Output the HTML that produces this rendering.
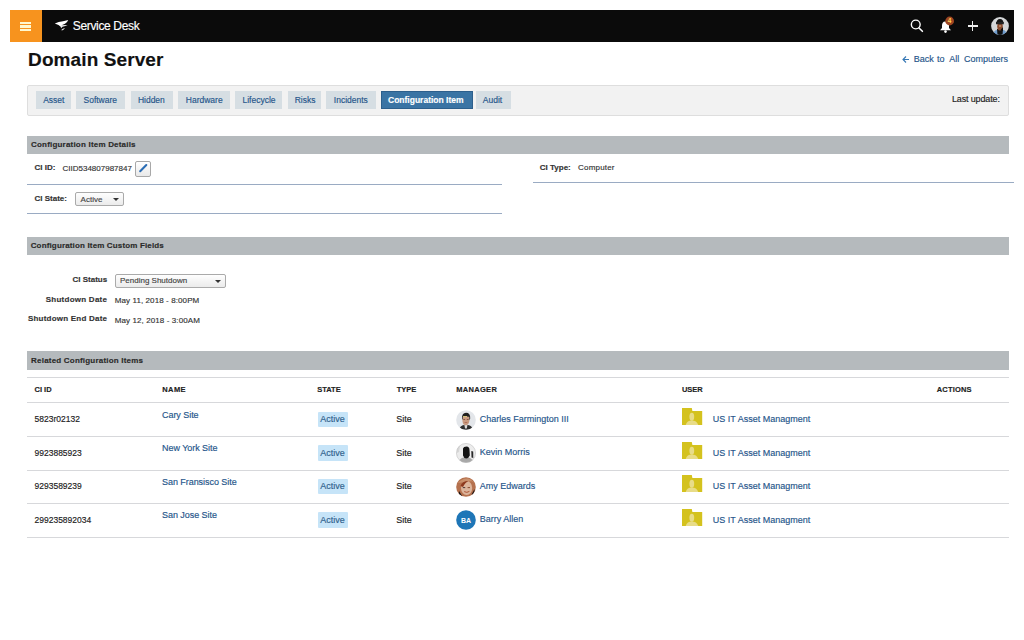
<!DOCTYPE html>
<html><head><meta charset="utf-8">
<style>
*{margin:0;padding:0;box-sizing:border-box}
html,body{width:1024px;height:640px;overflow:hidden;background:#fff}
body{position:relative;font-family:"Liberation Sans",sans-serif;color:#222}
.a{position:absolute}
.t{position:absolute;white-space:nowrap;line-height:1;-webkit-text-stroke:0.15px currentColor}
.lnk{color:#25558a}
.tab{position:absolute;top:91px;height:18px;background:#d6dee3}
.tab.on{background:#3a74a4;border:1px solid #2c5f8c}
.sh{position:absolute;left:27px;width:982px;height:18px;background:#b5babd}
.bl{position:absolute;height:1px;background:#9aabc3}
.tl{position:absolute;left:27px;width:982px;height:1px;background:#d7d8db}
.badge{position:absolute;left:317.5px;width:30.5px;height:15.5px;background:#c6e4f8;border-radius:1px}
.sel{position:absolute;background:linear-gradient(#fefefe,#ebebeb);border:1px solid #aaaaaa;border-radius:2px}
.arr{position:absolute;width:0;height:0;border-left:3px solid transparent;border-right:3px solid transparent;border-top:3px solid #333}
</style></head><body>
<div class="a" style="left:10px;top:10px;width:32px;height:32px;background:#f7931e"></div>
<div class="a" style="left:42px;top:10px;width:972px;height:32px;background:#0b0b0b"></div>
<div class="a" style="left:20px;top:21.6px;width:11px;height:2.4px;background:#fff8d0"></div>
<div class="a" style="left:20px;top:25.3px;width:11px;height:2.4px;background:#fff8d0"></div>
<div class="a" style="left:20px;top:28.9px;width:11px;height:2.4px;background:#fff8d0"></div>
<svg class="a" style="left:50px;top:14px" width="24" height="24" viewBox="0 0 24 24"><path d="M4.8 9.4 Q8.5 7.6 13 7.2 L18.2 6 Q17.3 8.6 15 9.8 L12.2 11 L10.8 12.8 Q9.2 10.6 4.8 9.4 Z" fill="#fff"/><path d="M10.5 11.2 L17.6 11.1 Q15.5 12.4 12.5 12.8 L11 14.2 Z" fill="#f0f0f0"/><path d="M11.3 16 Q12.5 14.6 15 14 Q14 15.6 12 16.4 Z" fill="#eee"/></svg>
<div class="t" style="left:72.80px;top:19.60px;font-size:12px;letter-spacing:-0.35px;color:#fff;">Service Desk</div>
<svg class="a" style="left:904px;top:12px" width="24" height="24" viewBox="0 0 24 24"><circle cx="11.75" cy="12.5" r="4.4" fill="none" stroke="#fff" stroke-width="1.4"/><path d="M15 16 L18.4 19.3" stroke="#fff" stroke-width="1.6" stroke-linecap="round"/></svg>
<svg class="a" style="left:937px;top:16px" width="18" height="18" viewBox="0 0 18 18"><path d="M8 5.5 C6 5.5 5 7.5 5 9.5 L5 12 L3 14.2 L14 14.2 L12 12 L12 9.5 C12 7.5 11 5.5 8 5.5 Z" fill="#fff"/><circle cx="8.5" cy="15.6" r="1.3" fill="#fff"/><circle cx="12.65" cy="5" r="4.4" fill="#9e4622"/><text x="12.65" y="7.4" font-size="6.5" font-family="Liberation Sans" font-weight="bold" fill="#ffd25a" text-anchor="middle">4</text></svg>
<div class="a" style="left:968px;top:25.3px;width:9.5px;height:1.3px;background:#eeeeee"></div>
<div class="a" style="left:972.1px;top:21px;width:1.3px;height:10px;background:#eeeeee"></div>
<svg class="a" style="left:991.3px;top:17px" width="18" height="18" viewBox="0 0 18 18"><defs><clipPath id="hc"><circle cx="9" cy="9" r="8.9"/></clipPath></defs><g clip-path="url(#hc)"><rect width="18" height="18" fill="#d4d6d8"/><path d="M2 18 Q3 13 6 13 L12 13 Q15 13 16 18 Z" fill="#6f9ccc"/><path d="M6 12 L12 12 L11.5 18 L6.5 18 Z" fill="#111"/><ellipse cx="9" cy="9.6" rx="2.8" ry="4" fill="#8a4a2c"/><rect x="8" y="8.5" width="2.2" height="1" fill="#d8b090"/><path d="M5.2 7 Q5.5 2 9 2 Q12.5 2 12.6 7 L12.6 5.8 L5.2 5.8 Z" fill="#151515"/><path d="M5 5 L12.8 5 L12.8 7.2 L5 7.2 Z" fill="#222"/><path d="M9.5 13 L12 10 L12 14 Z" fill="#0d0d0d"/></g></svg>
<div class="t" style="left:28.10px;top:50.45px;font-size:19px;letter-spacing:0.1px;font-weight:bold;color:#111;">Domain Server</div>
<svg class="a" style="left:902px;top:56px" width="8" height="7" viewBox="0 0 8 7"><path d="M4 0.5 L1 3.5 L4 6.5 M1 3.5 L7 3.5" stroke="#3577b5" stroke-width="1.1" fill="none"/></svg>
<div class="t lnk" style="left:913.80px;top:55.05px;font-size:9px;">Back</div>
<div class="t lnk" style="left:937.00px;top:55.05px;font-size:9px;">to</div>
<div class="t lnk" style="left:949.30px;top:55.05px;font-size:9px;">All</div>
<div class="t lnk" style="left:964.00px;top:55.05px;font-size:9px;">Computers</div>
<div class="a" style="left:27px;top:85px;width:982px;height:31px;background:#f2f2f2;border:1px solid #dedede;border-radius:2px"></div>
<div class="tab" style="left:35.7px;width:35.1px"></div>
<div class="t lnk" style="left:43.20px;top:95.68px;font-size:8.5px;">Asset</div>
<div class="tab" style="left:75.8px;width:48.8px"></div>
<div class="t lnk" style="left:83.50px;top:95.68px;font-size:8.5px;">Software</div>
<div class="tab" style="left:130.9px;width:41.8px"></div>
<div class="t lnk" style="left:137.90px;top:95.68px;font-size:8.5px;">Hidden</div>
<div class="tab" style="left:178.2px;width:51.6px"></div>
<div class="t lnk" style="left:185.80px;top:95.68px;font-size:8.5px;">Hardware</div>
<div class="tab" style="left:235.0px;width:47.3px"></div>
<div class="t lnk" style="left:242.50px;top:95.68px;font-size:8.5px;">Lifecycle</div>
<div class="tab" style="left:287.9px;width:33.2px"></div>
<div class="t lnk" style="left:294.70px;top:95.68px;font-size:8.5px;">Risks</div>
<div class="tab" style="left:326.2px;width:49.6px"></div>
<div class="t lnk" style="left:333.80px;top:95.68px;font-size:8.5px;">Incidents</div>
<div class="tab" style="left:475.7px;width:35.3px"></div>
<div class="t lnk" style="left:482.80px;top:95.68px;font-size:8.5px;">Audit</div>
<div class="tab on" style="left:381px;width:92px"></div>
<div class="t" style="left:388.00px;top:95.78px;font-size:8.5px;font-weight:bold;color:#fff;">Configuration Item</div>
<div class="t" style="left:952.00px;top:95.35px;font-size:9px;letter-spacing:-0.15px;color:#222;">Last update:</div>
<div class="sh" style="top:136px"></div>
<div class="t" style="left:31.00px;top:140.70px;font-size:8px;letter-spacing:0.2px;font-weight:bold;color:#2a2a2a;">Configuration Item Details</div>
<div class="t" style="left:34.50px;top:164.45px;font-size:8px;font-weight:bold;color:#333;">CI ID:</div>
<div class="t" style="left:62.50px;top:165.10px;font-size:8px;color:#333;">CIID534807987847</div>
<div class="a" style="left:135.3px;top:161.1px;width:15.5px;height:15.5px;border:1px solid #a8a8a8;border-radius:2px;background:linear-gradient(#fff,#e9e9e9)"></div>
<svg class="a" style="left:136px;top:162px" width="14" height="14" viewBox="0 0 14 14"><path d="M4.2 9.2 L10.3 3.1" stroke="#2b6db5" stroke-width="2.1" stroke-linecap="round"/></svg>
<div class="bl" style="left:27px;top:184px;width:475px"></div>
<div class="t" style="left:34.50px;top:194.70px;font-size:8px;font-weight:bold;color:#333;">CI State:</div>
<div class="sel" style="left:75px;top:192.25px;width:48.5px;height:14px"></div>
<div class="t" style="left:80.60px;top:195.70px;font-size:8px;color:#444;">Active</div>
<div class="arr" style="left:113px;top:198px"></div>
<div class="bl" style="left:27px;top:212.5px;width:475px"></div>
<div class="t" style="left:539.80px;top:164.10px;font-size:8px;font-weight:bold;color:#333;">CI Type:</div>
<div class="t" style="left:578.00px;top:164.10px;font-size:8px;letter-spacing:0.2px;color:#333;">Computer</div>
<div class="bl" style="left:532.5px;top:182px;width:481.5px"></div>
<div class="sh" style="top:237px"></div>
<div class="t" style="left:30.70px;top:242.10px;font-size:8px;letter-spacing:0.15px;font-weight:bold;color:#2a2a2a;">Configuration Item Custom Fields</div>
<div class="t" style="left:0;width:107.20px;text-align:right;top:275.90px;font-size:8px;font-weight:bold;color:#333;">CI Status</div>
<div class="sel" style="left:114.5px;top:273.5px;width:111.5px;height:14px"></div>
<div class="t" style="left:120.00px;top:276.70px;font-size:8px;color:#444;">Pending Shutdown</div>
<div class="arr" style="left:215px;top:279.5px"></div>
<div class="t" style="left:0;width:107.20px;text-align:right;top:295.90px;font-size:8px;letter-spacing:0.25px;font-weight:bold;color:#333;">Shutdown Date</div>
<div class="t" style="left:114.70px;top:297.20px;font-size:8px;letter-spacing:0.1px;color:#333;">May 11, 2018 - 8:00PM</div>
<div class="t" style="left:0;width:107.20px;text-align:right;top:315.00px;font-size:8px;letter-spacing:0.22px;font-weight:bold;color:#333;">Shutdown End Date</div>
<div class="t" style="left:114.70px;top:316.50px;font-size:8px;letter-spacing:0.1px;color:#333;">May 12, 2018 - 3:00AM</div>
<div class="sh" style="top:351px;height:18.5px"></div>
<div class="t" style="left:31.10px;top:356.50px;font-size:8px;letter-spacing:0.2px;font-weight:bold;color:#2a2a2a;">Related Configuration Items</div>
<div class="tl" style="top:377px"></div>
<div class="t" style="left:34.50px;top:386.32px;font-size:7.5px;letter-spacing:0px;font-weight:bold;color:#222;">CI ID</div>
<div class="t" style="left:162.30px;top:386.32px;font-size:7.5px;letter-spacing:0.4px;font-weight:bold;color:#222;">NAME</div>
<div class="t" style="left:317.20px;top:386.32px;font-size:7.5px;letter-spacing:0px;font-weight:bold;color:#222;">STATE</div>
<div class="t" style="left:396.70px;top:386.32px;font-size:7.5px;letter-spacing:0px;font-weight:bold;color:#222;">TYPE</div>
<div class="t" style="left:456.25px;top:386.32px;font-size:7.5px;letter-spacing:0.3px;font-weight:bold;color:#222;">MANAGER</div>
<div class="t" style="left:681.90px;top:386.32px;font-size:7.5px;letter-spacing:0px;font-weight:bold;color:#222;">USER</div>
<div class="t" style="left:936.80px;top:386.32px;font-size:7.5px;letter-spacing:0.15px;font-weight:bold;color:#222;">ACTIONS</div>
<div class="tl" style="top:402px"></div>
<div class="t" style="left:34.50px;top:415.38px;font-size:8.5px;transform:scaleY(1.14);transform-origin:0 85%;color:#222;">5823r02132</div>
<div class="t lnk" style="left:162.00px;top:410.85px;font-size:9px;transform:scaleY(1.1);transform-origin:0 85%;letter-spacing:-0.05px;">Cary Site</div>
<div class="badge" style="top:411.9px"></div>
<div class="t" style="left:320.30px;top:415.25px;font-size:9px;color:#2f5f8c;">Active</div>
<div class="t" style="left:396.25px;top:415.05px;font-size:9px;transform:scaleY(1.1);transform-origin:0 85%;color:#222;">Site</div>
<svg class="a" style="left:456px;top:409.7px" width="20" height="20" viewBox="0 0 20 20"><defs><clipPath id="c1"><circle cx="10" cy="10" r="9.8"/></clipPath></defs><g clip-path="url(#c1)"><rect width="20" height="20" fill="#e3e6ea"/><path d="M3 20 Q4 15.5 8 15 L12 15 Q16 15.5 17 20 Z" fill="#2e2e2e"/><path d="M8.3 14.5 L11.5 14.5 L10.8 18.5 L9 18.5 Z" fill="#dcdcdc"/><path d="M6.3 8 Q6.3 4.5 9.8 4.3 Q13.6 4.3 13.5 8.5 L13.2 12 Q12 15.3 9.8 15.3 Q7.2 15.2 6.6 12 Z" fill="#c89a80"/><path d="M6 8.5 Q5.8 3 10 2.8 Q14.5 2.8 14.2 8.5 L13.4 10.5 L13.3 6.8 Q10 6 6.8 7 L6.6 10 Z" fill="#1e1e1e"/><rect x="7" y="6.2" width="4" height="0.9" fill="#efe08c"/><rect x="7.3" y="9.2" width="1.8" height="0.7" fill="#6a3a2a"/><rect x="10.8" y="9.2" width="1.8" height="0.7" fill="#6a3a2a"/><rect x="8.6" y="12.2" width="2.6" height="0.7" fill="#a8604a"/></g></svg>
<div class="t lnk" style="left:479.80px;top:414.85px;font-size:9px;transform:scaleY(1.1);transform-origin:0 85%;">Charles Farmington III</div>
<svg class="a" style="left:681px;top:408.0px" width="22" height="17" viewBox="0 0 22 17"><path d="M1 0 L10.8 0 L11.4 3 L21.2 3 L21.2 17 L1 17 Z" fill="#d4c21e"/><ellipse cx="10.8" cy="8.8" rx="2.4" ry="4" fill="#e8dc88"/><path d="M4.7 17 Q6 12.6 10.8 12.6 Q15.6 12.6 17.3 17 Z" fill="#e8dc88"/></svg>
<div class="t lnk" style="left:712.80px;top:415.05px;font-size:9px;transform:scaleY(1.1);transform-origin:0 85%;">US IT Asset Managment</div>
<div class="tl" style="top:436.2px"></div>
<div class="t" style="left:34.50px;top:448.88px;font-size:8.5px;transform:scaleY(1.14);transform-origin:0 85%;color:#222;">9923885923</div>
<div class="t lnk" style="left:162.00px;top:444.35px;font-size:9px;transform:scaleY(1.1);transform-origin:0 85%;letter-spacing:-0.05px;">New York Site</div>
<div class="badge" style="top:445.4px"></div>
<div class="t" style="left:320.30px;top:448.75px;font-size:9px;color:#2f5f8c;">Active</div>
<div class="t" style="left:396.25px;top:448.55px;font-size:9px;transform:scaleY(1.1);transform-origin:0 85%;color:#222;">Site</div>
<svg class="a" style="left:456px;top:443.2px" width="20" height="20" viewBox="0 0 20 20"><defs><clipPath id="c2"><circle cx="10" cy="10" r="9.8"/></clipPath></defs><g clip-path="url(#c2)"><rect width="20" height="20" fill="#ececec"/><path d="M2 20 Q4 14 10 14 Q16 14 18 20 Z" fill="#a8a8a8"/><path d="M7 5.5 Q7.5 3.5 10.5 3.5 Q13.5 3.8 13.5 7 L13.8 12.5 Q12.5 15.5 10.2 15.5 Q7.8 15.3 7 12.5 Z" fill="#121212"/><path d="M15.3 8 L17.2 8.5 L17.3 15 L15.5 14.5 Z" fill="#2a2a2a"/><path d="M1 4 L4 3 L3 9 L1 10 Z" fill="#d6d6d6"/></g><circle cx="10" cy="10" r="9.6" fill="none" stroke="#bdbdbd" stroke-width="0.5"/></svg>
<div class="t lnk" style="left:479.80px;top:448.35px;font-size:9px;transform:scaleY(1.1);transform-origin:0 85%;">Kevin Morris</div>
<svg class="a" style="left:681px;top:441.5px" width="22" height="17" viewBox="0 0 22 17"><path d="M1 0 L10.8 0 L11.4 3 L21.2 3 L21.2 17 L1 17 Z" fill="#d4c21e"/><ellipse cx="10.8" cy="8.8" rx="2.4" ry="4" fill="#e8dc88"/><path d="M4.7 17 Q6 12.6 10.8 12.6 Q15.6 12.6 17.3 17 Z" fill="#e8dc88"/></svg>
<div class="t lnk" style="left:712.80px;top:448.55px;font-size:9px;transform:scaleY(1.1);transform-origin:0 85%;">US IT Asset Managment</div>
<div class="tl" style="top:469.7px"></div>
<div class="t" style="left:34.50px;top:482.38px;font-size:8.5px;transform:scaleY(1.14);transform-origin:0 85%;color:#222;">9293589239</div>
<div class="t lnk" style="left:162.00px;top:477.85px;font-size:9px;transform:scaleY(1.1);transform-origin:0 85%;letter-spacing:-0.05px;">San Fransisco Site</div>
<div class="badge" style="top:478.9px"></div>
<div class="t" style="left:320.30px;top:482.25px;font-size:9px;color:#2f5f8c;">Active</div>
<div class="t" style="left:396.25px;top:482.05px;font-size:9px;transform:scaleY(1.1);transform-origin:0 85%;color:#222;">Site</div>
<svg class="a" style="left:456px;top:476.7px" width="20" height="20" viewBox="0 0 20 20"><defs><clipPath id="c3"><circle cx="10" cy="10" r="9.8"/></clipPath></defs><g clip-path="url(#c3)"><rect width="20" height="20" fill="#b5714e"/><path d="M2 6 Q6 1 12 1.5 Q18 3 18 9 L17 4 Z" fill="#c9906c"/><ellipse cx="10.6" cy="11" rx="5.6" ry="7" fill="#dcb59c"/><path d="M4.5 9 Q6.5 3.5 12.5 4 Q9 5.5 7 10 Z" fill="#8e3a1e"/><rect x="6.8" y="10.2" width="2.4" height="0.9" fill="#3a2a2a"/><rect x="11.6" y="10.2" width="2.4" height="0.9" fill="#7e3e22"/><path d="M8.2 14.6 Q10.8 16.2 13.4 14.4" stroke="#a7482a" stroke-width="0.9" fill="none"/><path d="M3 14 L6.5 19.5 L2.5 19 Z" fill="#1a1414"/><path d="M15.5 17.5 L18.5 12 L18.5 19 Z" fill="#241a18"/></g></svg>
<div class="t lnk" style="left:479.80px;top:481.85px;font-size:9px;transform:scaleY(1.1);transform-origin:0 85%;">Amy Edwards</div>
<svg class="a" style="left:681px;top:475.0px" width="22" height="17" viewBox="0 0 22 17"><path d="M1 0 L10.8 0 L11.4 3 L21.2 3 L21.2 17 L1 17 Z" fill="#d4c21e"/><ellipse cx="10.8" cy="8.8" rx="2.4" ry="4" fill="#e8dc88"/><path d="M4.7 17 Q6 12.6 10.8 12.6 Q15.6 12.6 17.3 17 Z" fill="#e8dc88"/></svg>
<div class="t lnk" style="left:712.80px;top:482.05px;font-size:9px;transform:scaleY(1.1);transform-origin:0 85%;">US IT Asset Managment</div>
<div class="tl" style="top:503.2px"></div>
<div class="t" style="left:34.50px;top:515.88px;font-size:8.5px;transform:scaleY(1.14);transform-origin:0 85%;color:#222;">299235892034</div>
<div class="t lnk" style="left:162.00px;top:511.35px;font-size:9px;transform:scaleY(1.1);transform-origin:0 85%;letter-spacing:-0.05px;">San Jose Site</div>
<div class="badge" style="top:512.4px"></div>
<div class="t" style="left:320.30px;top:515.75px;font-size:9px;color:#2f5f8c;">Active</div>
<div class="t" style="left:396.25px;top:515.55px;font-size:9px;transform:scaleY(1.1);transform-origin:0 85%;color:#222;">Site</div>
<svg class="a" style="left:456px;top:510.2px" width="20" height="20" viewBox="0 0 20 20"><circle cx="10" cy="10" r="9.8" fill="#1e76b7"/><text x="10" y="12.6" font-size="7" font-weight="bold" font-family="Liberation Sans" fill="#fff" text-anchor="middle">BA</text></svg>
<div class="t lnk" style="left:479.80px;top:515.35px;font-size:9px;transform:scaleY(1.1);transform-origin:0 85%;">Barry Allen</div>
<svg class="a" style="left:681px;top:508.5px" width="22" height="17" viewBox="0 0 22 17"><path d="M1 0 L10.8 0 L11.4 3 L21.2 3 L21.2 17 L1 17 Z" fill="#d4c21e"/><ellipse cx="10.8" cy="8.8" rx="2.4" ry="4" fill="#e8dc88"/><path d="M4.7 17 Q6 12.6 10.8 12.6 Q15.6 12.6 17.3 17 Z" fill="#e8dc88"/></svg>
<div class="t lnk" style="left:712.80px;top:515.55px;font-size:9px;transform:scaleY(1.1);transform-origin:0 85%;">US IT Asset Managment</div>
<div class="tl" style="top:536.7px"></div>
</body></html>
